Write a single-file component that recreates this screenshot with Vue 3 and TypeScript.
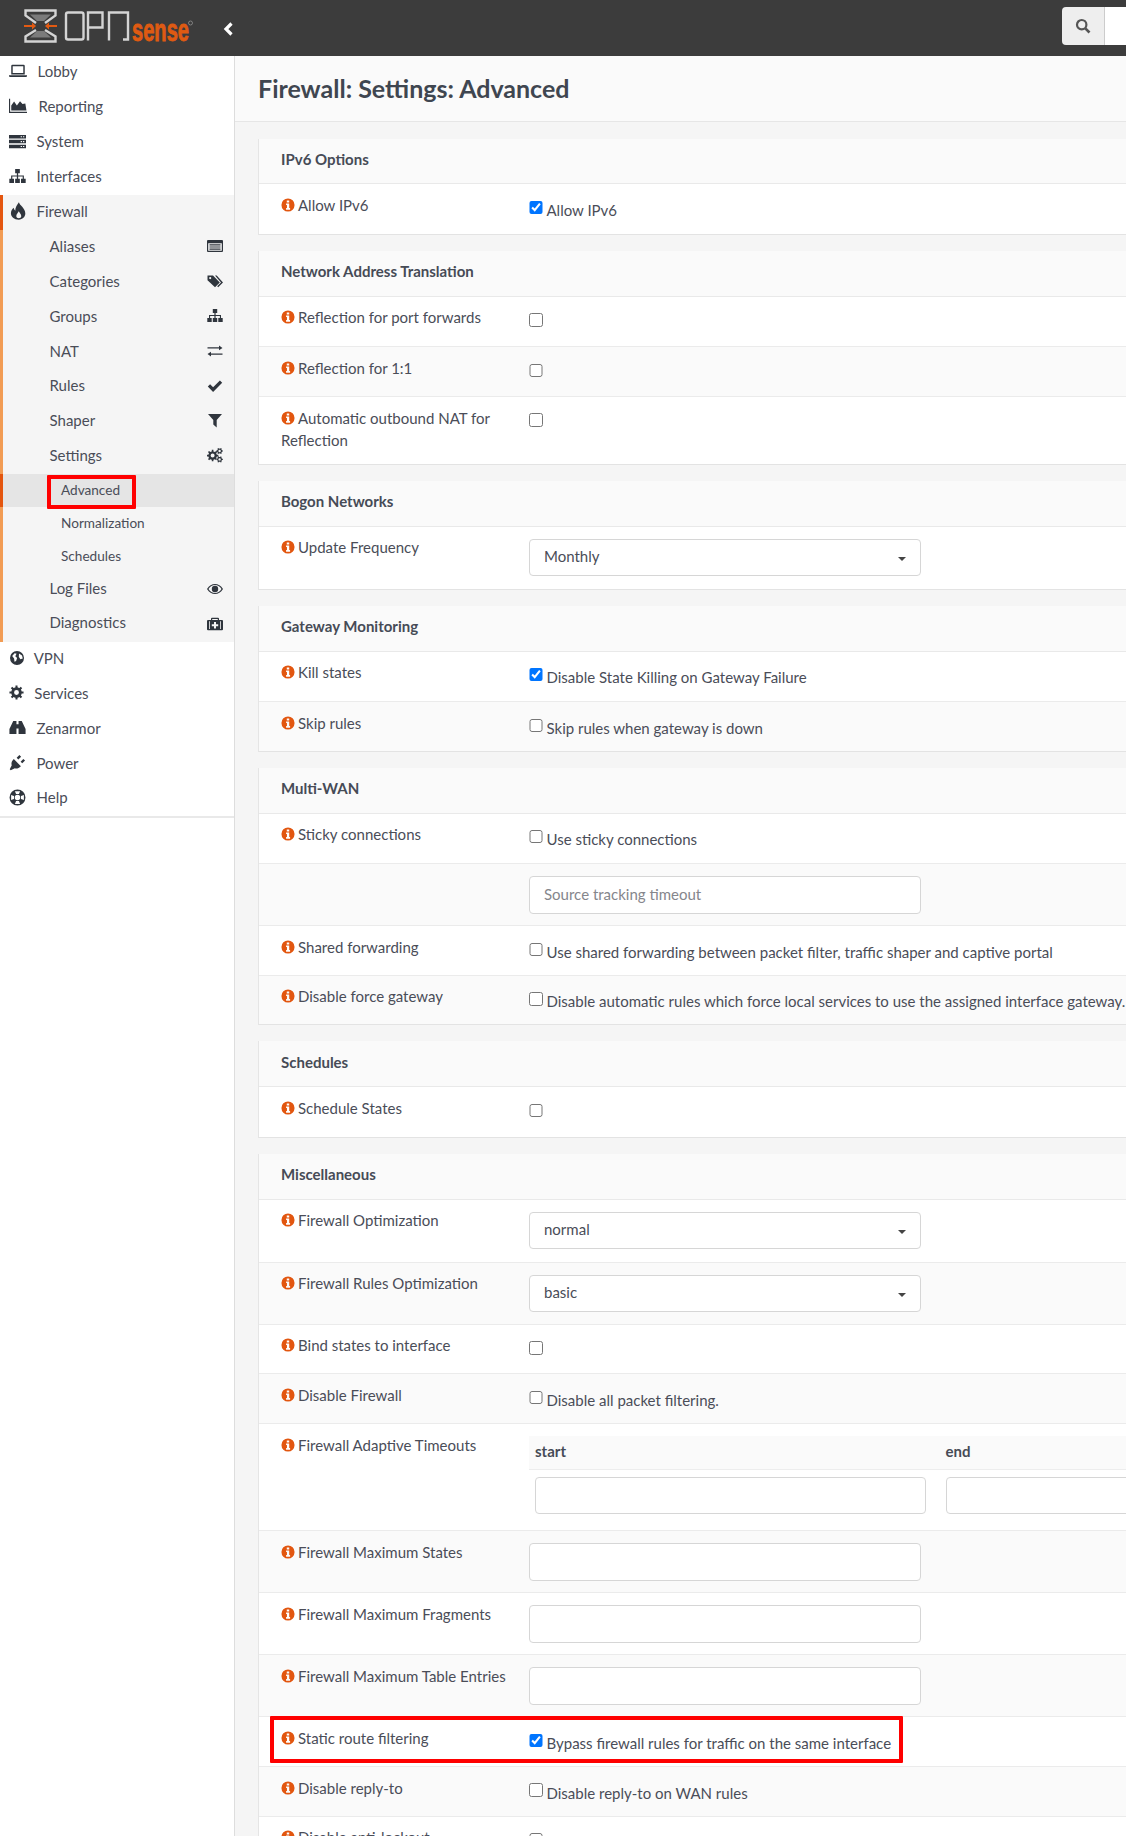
<script setup lang="ts">
type NavItem = {
  label: string
  icon?: string
  x?: number
  size?: number
  kind?: "sub" | "leaf"
  active?: boolean
  boxed?: boolean
}

type Row = {
  label?: string
  wrap?: boolean
  check?: boolean
  text?: string
  select?: string
  input?: string
  adaptive?: boolean
  tall?: boolean
  boxed?: boolean
}

type Section = { title: string; rows: Row[] }

// builds a cog outline, hole included
const gear = (cx: number, cy: number, r: number, hole: number, teeth = 8) => {
  let d = ""
  const step = (Math.PI * 2) / teeth
  for (let i = 0; i < teeth; i++) {
    const a = i * step
    const pts: [number, number][] = [
      [a - step * 0.5, r * 0.74],
      [a - step * 0.25, r * 0.74],
      [a - step * 0.18, r],
      [a + step * 0.18, r],
      [a + step * 0.25, r * 0.74],
    ]
    for (const [t, l] of pts) {
      d += `${d ? "L" : "M"}${(cx + Math.cos(t) * l).toFixed(2)} ${(cy + Math.sin(t) * l).toFixed(2)}`
    }
  }
  d += `zM${cx - hole} ${cy}a${hole} ${hole} 0 1 0 ${hole * 2} 0a${hole} ${hole} 0 1 0 ${-hole * 2} 0z`
  return d
}

const icons: Record<string, string> = {
  laptop: "M3 2.5h10a1 1 0 0 1 1 1v7.5H2V3.500a1 1 0 0 1 1-1zM3.300 3.800v6h9.400v-6zM0 11.800h16v.6a1 1 0 0 1-1 1H1a1 1 0 0 1-1-1z",
  chart: "M0 1.500h1V13h15v1.200H0zM2 12V7.500l2.500-3.500 2.500 3.500 2.800-3.800 2.200 2.500 2.500-.5 1 6.300z",
  server: "M0 1.800h16v3.300H0zM11 3h1.200v1H11zM13.200 3h1.200v1h-1.200zM0 6.400h16v3.300H0zM11 7.600h1.200v1H11zM13.200 7.600h1.200v1h-1.200zM0 11h16v3.300H0zM11 12.200h1.200v1H11zM13.200 12.200h1.200v1h-1.200z",
  sitemap: "M5.800 1h4.400v4H8.600v2H14v3h-1.100V8H8.600v2H7.400V8H3.100v2H2V7h5.400V5H5.800zM.3 10h4.400v4H.3zM5.800 10h4.400v4H5.800zM11.300 10h4.400v4h-4.400z",
  fire: "M8.800.3c.8 3 5.700 5.200 5.700 10 0 3-2.500 5.400-5.800 5.400C4.500 15.700 1.700 13 1.700 10c0-2.200 1.200-3.600 2.500-4.800.2 1.100.6 2 1.400 2.500C5.400 5 7.200 2.800 8.800.3zM8.700 8.300C7.800 9.800 6.500 11 6.500 12.700c0 1 1 1.800 2.200 1.800s2.200-.8 2.200-1.800c0-1.700-1.400-2.900-2.200-4.400z",
  list: "M1 2h14a1 1 0 0 1 1 1v10a1 1 0 0 1-1 1H1a1 1 0 0 1-1-1V3a1 1 0 0 1 1-1zM1.200 5.200v7.600h13.600V5.200zM2.500 6.300h11v1.200h-11zM2.500 8.400h11v1.200h-11zM2.500 10.500h11v1.200h-11z",
  tags: "M.5 2.500h5.500l6.800 7-4.800 4.800-7.500-7zM3.200 4a1.100 1.100 0 1 0 0 2.200 1.100 1.100 0 0 0 0-2.200zM8 2.500h1.700l6.300 7-4.800 4.800-1-1 3.800-3.800z",
  exchange: "M.5 4.200H12V2.500l3.500 2.400L12 7.300V5.600H.5zM15.500 10.400H4V8.700L.5 11.100 4 13.500v-1.700h11.500z",
  check: "M.8 8.600l2.300-2.300 3 3 6.800-6.800 2.300 2.300-9.100 9.100z",
  filter: "M1 2h14L9.700 8v7.500L6.300 12.500V8z",
  eye: "M0 8c2-3.500 5-5 8-5s6 1.500 8 5c-2 3.500-5 5-8 5s-6-1.500-8-5zM1.500 8c1.500 2.500 4 3.900 6.500 3.900s5-1.400 6.500-3.900C13 5.500 10.500 4.100 8 4.100S3 5.500 1.500 8zM8 4.800a3.200 3.200 0 1 1 0 6.400 3.200 3.200 0 0 1 0-6.400z",
  medkit: "M5 1.800h6a1 1 0 0 1 1 1V4h3a1 1 0 0 1 1 1v8.200a1 1 0 0 1-1 1H1a1 1 0 0 1-1-1V5a1 1 0 0 1 1-1h3V2.800a1 1 0 0 1 1-1zM5.200 3v1h5.600V3zM2.200 5.200v7.800H3V5.200zM13 5.200v7.800h.8V5.200zM7 6h2v2.200h2.200v2H9v2.200H7v-2.200H4.800v-2H7z",
  globe: "M8 1a7 7 0 1 1 0 14A7 7 0 0 1 8 1zM3.200 6l2.400-2.800 2 .6-1.300 2.400 1.800 1.800-1 3-1.600.8-.4-3.200zM10 3.600l3 1.800.8 3.200-2.400.6-1.600-2.400z",
  binoculars: "M4 1.800h3v12.400H.4V9.500zM9 1.800h3l3.600 7.700v4.700H9zM7 5h2v4H7z",
  plug: "M9.800.9l1.600 1.600-2.600 2.600-1.600-1.600zM15.100 6.200l-1.600-1.600-2.600 2.600 1.600 1.600zM4.500 4.800l6.700 6.700c-2 2-4.100 2.600-5.700 1.900L1.600 15.300.7 14.400l1.900-3.900C1.900 8.900 2.500 6.800 4.500 4.800z",
  lifering: "M8 .5a7.500 7.500 0 1 1 0 15 7.500 7.500 0 0 1 0-15zM5.600 2h4.800L9.400 4.700H6.600zM5.600 14h4.800L9.400 11.300H6.600zM2 5.600v4.800l2.700-1V6.600zM14 5.600v4.800l-2.700-1V6.600zM8 5.400a2.600 2.600 0 1 0 0 5.200 2.600 2.600 0 0 0 0-5.200z",
  cog: gear(8, 8, 7.6, 2.6),
  cogs: gear(5.6, 8.6, 5.8, 2) + gear(12.6, 4, 3.3, 1.2, 6) + gear(12.6, 12.4, 3.3, 1.2, 6),
}

const navItems: NavItem[] = [
  { label: "Lobby", icon: "laptop", x: 37.5 },
  { label: "Reporting", icon: "chart", x: 38.5 },
  { label: "System", icon: "server", x: 36.5, size: 17 },
  { label: "Interfaces", icon: "sitemap", x: 36.5, size: 17 },
]

const firewallItems: NavItem[] = [
  { label: "Firewall", icon: "fire", x: 36.5, active: true },
  { label: "Aliases", icon: "list", kind: "sub" },
  { label: "Categories", icon: "tags", kind: "sub" },
  { label: "Groups", icon: "sitemap", kind: "sub" },
  { label: "NAT", icon: "exchange", kind: "sub" },
  { label: "Rules", icon: "check", kind: "sub" },
  { label: "Shaper", icon: "filter", kind: "sub" },
  { label: "Settings", icon: "cogs", kind: "sub" },
  { label: "Advanced", kind: "leaf", active: true, boxed: true },
  { label: "Normalization", kind: "leaf" },
  { label: "Schedules", kind: "leaf" },
  { label: "Log Files", icon: "eye", kind: "sub" },
  { label: "Diagnostics", icon: "medkit", kind: "sub" },
]

const bottomItems: NavItem[] = [
  { label: "VPN", icon: "globe", x: 33.7, size: 16 },
  { label: "Services", icon: "cog", x: 34.3, size: 15 },
  { label: "Zenarmor", icon: "binoculars", x: 36.5, size: 17 },
  { label: "Power", icon: "plug", x: 36.5, size: 17 },
  { label: "Help", icon: "lifering", x: 36.5, size: 17 },
]

const sections: Section[] = [
  {
    title: "IPv6 Options",
    rows: [{ label: "Allow IPv6", check: true, text: "Allow IPv6" }],
  },
  {
    title: "Network Address Translation",
    rows: [
      { label: "Reflection for port forwards", check: false },
      { label: "Reflection for 1:1", check: false },
      { label: "Automatic outbound NAT for Reflection", check: false, wrap: true, tall: true },
    ],
  },
  {
    title: "Bogon Networks",
    rows: [{ label: "Update Frequency", select: "Monthly" }],
  },
  {
    title: "Gateway Monitoring",
    rows: [
      { label: "Kill states", check: true, text: "Disable State Killing on Gateway Failure" },
      { label: "Skip rules", check: false, text: "Skip rules when gateway is down" },
    ],
  },
  {
    title: "Multi-WAN",
    rows: [
      { label: "Sticky connections", check: false, text: "Use sticky connections" },
      { input: "Source tracking timeout" },
      { label: "Shared forwarding", check: false, text: "Use shared forwarding between packet filter, traffic shaper and captive portal" },
      { label: "Disable force gateway", check: false, text: "Disable automatic rules which force local services to use the assigned interface gateway." },
    ],
  },
  {
    title: "Schedules",
    rows: [{ label: "Schedule States", check: false }],
  },
  {
    title: "Miscellaneous",
    rows: [
      { label: "Firewall Optimization", select: "normal" },
      { label: "Firewall Rules Optimization", select: "basic" },
      { label: "Bind states to interface", check: false },
      { label: "Disable Firewall", check: false, text: "Disable all packet filtering." },
      { label: "Firewall Adaptive Timeouts", adaptive: true },
      { label: "Firewall Maximum States", input: "" },
      { label: "Firewall Maximum Fragments", input: "" },
      { label: "Firewall Maximum Table Entries", input: "" },
      { label: "Static route filtering", check: true, text: "Bypass firewall rules for traffic on the same interface", boxed: true },
      { label: "Disable reply-to", check: false, text: "Disable reply-to on WAN rules" },
      { label: "Disable anti-lockout", check: false },
    ],
  },
]
</script>

<template>
  <div class="page">
    <header class="topbar">
      <svg class="logo" viewBox="15 0 190 55" width="190" height="55" role="img" aria-label="OPNsense">
        <path d="M30 14.500H51L44 21H37zM30 37.500H51L44 31H37z" fill="#7b7b7b" />
        <g fill="none" stroke="#d4d4d4" stroke-width="2.4">
          <path d="M36 23 25.500 15.500V10.500H55.500V15.500L45 23M36 30 25.500 36.500V41.500H55.500V36.500L45 30" />
          <rect x="66" y="12.500" width="17.500" height="27" rx="2" />
          <polyline points="88,40.500 88,12.500 102.500,12.500 102.500,27.500 89,27.500" />
          <polyline points="109,40.500 109,12.500 128,12.500 128,39.500 123,39.500" />
        </g>
        <path d="M24 25h8v-2.500l4 3.500-4 3.500V27h-8zM57 25h-8v-2.500L45 26l4 3.500V27h8z" fill="#e35a12" />
        <text class="logo-sense" x="132" y="41" textLength="57" lengthAdjust="spacingAndGlyphs">sense</text>
        <circle cx="190.500" cy="23" r="2" fill="none" stroke="#999" stroke-width=".7" />
      </svg>
      <svg class="collapse" viewBox="0 0 12 16" width="12" height="16">
        <path d="M9.500 2.500 4 8l5.500 5.500" fill="none" stroke="#fff" stroke-width="3.200" />
      </svg>
      <div class="search">
        <button class="search-btn" type="button" aria-label="Search">
          <svg viewBox="0 0 16 16" width="16" height="16">
            <circle cx="6.700" cy="6.700" r="4.700" fill="none" stroke="#555" stroke-width="2.200" />
            <path d="m10.300 10.300 4.200 4.200" stroke="#555" stroke-width="2.600" />
          </svg>
        </button>
        <input class="search-input" type="text" />
      </div>
    </header>

    <div class="body">
      <aside class="sidebar">
        <nav>
          <a v-for="item in navItems" :key="item.label" class="nav-item">
            <span class="nav-icon" :style="{ width: (item.x ?? 0) - 9 + 'px' }">
              <svg viewBox="0 0 16 16" :width="item.size ?? 18" :height="item.size ?? 18"><path :d="icons[item.icon!]" fill-rule="evenodd" /></svg>
            </span>
            {{ item.label }}
          </a>
          <div class="nav-group">
            <a
              v-for="item in firewallItems"
              :key="item.label"
              class="nav-item"
              :class="[item.kind, { active: item.active }]"
            >
              <span v-if="!item.kind" class="nav-icon" :style="{ width: (item.x ?? 0) - 9 + 'px' }">
                <svg viewBox="0 0 16 16" width="18" height="18"><path :d="icons[item.icon!]" fill-rule="evenodd" /></svg>
              </span>
              {{ item.label }}
              <svg v-if="item.kind === 'sub'" class="sub-icon" viewBox="0 0 16 16" width="16" height="16">
                <path :d="icons[item.icon!]" fill-rule="evenodd" />
              </svg>
              <span v-if="item.boxed" class="redbox nav-box"></span>
            </a>
          </div>
          <a v-for="item in bottomItems" :key="item.label" class="nav-item">
            <span class="nav-icon" :style="{ width: (item.x ?? 0) - 9 + 'px' }">
              <svg viewBox="0 0 16 16" :width="item.size ?? 18" :height="item.size ?? 18"><path :d="icons[item.icon!]" fill-rule="evenodd" /></svg>
            </span>
            {{ item.label }}
          </a>
        </nav>
      </aside>

      <main class="main">
        <div class="title-bar"><h1>Firewall: Settings: Advanced</h1></div>
        <div class="content">
          <section v-for="section in sections" :key="section.title" class="card">
            <h2>{{ section.title }}</h2>
            <div
              v-for="(row, i) in section.rows"
              :key="i"
              class="row"
              :class="{
                even: i % 2 === 1,
                field: row.select !== undefined || row.input !== undefined,
                tall: row.tall,
                adaptive: row.adaptive,
              }"
            >
              <div class="row-label">
                <template v-if="row.label">
                  <svg class="info" viewBox="0 0 16 16" width="14" height="14">
                    <path
                      d="M8 .5a7.500 7.500 0 1 1 0 15 7.500 7.500 0 0 1 0-15zM6.600 2.800h2.800v2.200H6.600zM5.800 6.200h3.600v5.300h1v1.800H5.800v-1.800h1V8H5.800z"
                      fill-rule="evenodd"
                    />
                  </svg>
                  <span :class="{ wrap: row.wrap }">{{ row.label }}</span>
                </template>
              </div>
              <div class="row-value">
                <label v-if="row.check !== undefined" class="check">
                  <input type="checkbox" :checked="row.check" />
                  <span v-if="row.text">{{ row.text }}</span>
                </label>
                <div v-else-if="row.select" class="select">
                  {{ row.select }}
                  <span class="caret"></span>
                </div>
                <input v-else-if="row.input !== undefined" class="text-input" type="text" :placeholder="row.input" />
                <div v-else-if="row.adaptive" class="adaptive-grid">
                  <div class="adaptive-head">start</div>
                  <div class="adaptive-head">end</div>
                  <input class="text-input wide" type="text" />
                  <input class="text-input wide" type="text" />
                </div>
              </div>
              <span v-if="row.boxed" class="redbox row-box"></span>
            </div>
          </section>
        </div>
      </main>
    </div>
  </div>
</template>

<style>
html,
body {
  margin: 0;
  background: #fff;
}
</style>

<style scoped>
.page {
  width: 1126px;
  height: 1836px;
  overflow: hidden;
  font-family: Lato, "Noto Sans", sans-serif;
  font-size: 15px;
  color: #4a4d58;
}

.topbar {
  height: 55.5px;
  box-sizing: border-box;
  background: #3c3c3c;
  display: flex;
  align-items: flex-start;
}
.logo {
  margin-left: 15px;
  flex: none;
}
.logo-sense {
  font-family: "Liberation Sans", sans-serif;
  font-weight: 700;
  font-size: 31px;
  fill: #df5a12;
  stroke: #df5a12;
  stroke-width: 0.9px;
}
.collapse {
  flex: none;
  margin: 21px 0 0 17px;
}
.search {
  display: flex;
  margin: 7px 0 0 auto;
  height: 37.500px;
}
.search-btn {
  width: 43px;
  padding: 0;
  border: 0;
  border-right: 1px solid #ccc;
  border-radius: 4px 0 0 4px;
  background: #eee;
  display: flex;
  align-items: center;
  justify-content: center;
}
.search-input {
  width: 21px;
  padding: 0;
  border: 0;
  background: #fff;
}

.body {
  display: flex;
  height: 1780.5px;
}
.sidebar {
  width: 235px;
  flex: none;
  box-sizing: border-box;
  border-right: 1px solid #ddd;
  background: #fff;
}
nav {
  border-bottom: 2px solid #e9e9e9;
}
.nav-item {
  position: relative;
  display: flex;
  align-items: center;
  height: 34.900px;
  box-sizing: border-box;
  padding: 0 0 3px 9px;
  color: #4a4d58;
}
.nav-icon {
  flex: none;
  display: flex;
  align-items: center;
}
.nav-icon svg,
.sub-icon {
  fill: #2f353d;
}

.nav-group {
  background: #f5f5f5;
}
.nav-group .nav-item {
  border-left: 3px solid #f29c54;
  padding-left: 6px;
}
.nav-group .nav-item.active {
  border-left-color: #e4560f;
}
.nav-group .sub {
  padding-left: 46.500px;
}
.sub-icon {
  position: absolute;
  left: 204px;
  top: 8px;
}
.nav-group .leaf {
  height: 33px;
  padding: 0 0 1px 58px;
  font-size: 13.600px;
}
.nav-group .leaf.active {
  background: #e5e5e5;
}
.nav-group .nav-item:nth-last-child(-n + 2) {
  height: 34.400px;
  padding-bottom: 5px;
}

.redbox {
  position: absolute;
  box-sizing: border-box;
  border: 4px solid #f00;
  border-radius: 1px;
}
.nav-box {
  left: 43.500px;
  top: 1px;
  width: 89.500px;
  height: 34px;
}

.main {
  flex: 1;
  min-width: 0;
  overflow: hidden;
  background: #f5f5f5;
}
.title-bar {
  height: 66px;
  box-sizing: border-box;
  background: #fafafa;
  border-bottom: 1px solid #e6e6e6;
  padding-left: 23px;
  display: flex;
  align-items: center;
}
h1 {
  margin: 0;
  font-size: 25px;
  font-weight: 700;
  color: #3f4650;
}
.content {
  padding: 17px 0 0 23px;
}
.card {
  width: 900px;
  margin-bottom: 16px;
  box-sizing: border-box;
  border-left: 1px solid #e5e5e5;
  border-bottom: 1px solid #e3e3e3;
  background: #fff;
}
h2 {
  margin: 0;
  height: 45.850px;
  box-sizing: border-box;
  padding: 0 0 4px 22px;
  display: flex;
  align-items: center;
  background: #fafafa;
  border-bottom: 1px solid #e9e9e9;
  font-size: 15px;
  font-weight: 700;
  color: #464b56;
}
.row {
  position: relative;
  display: flex;
  height: 49.600px;
  box-sizing: border-box;
  border-top: 1px solid #ebebeb;
  background: #fff;
}
h2 + .row {
  border-top: 0;
}
.row.even {
  background: #fafafa;
}
.row.field {
  height: 62px;
}
.row.tall {
  height: 68px;
}
.row.adaptive {
  height: 107.500px;
}
.row-label {
  width: 270px;
  flex: none;
  box-sizing: border-box;
  padding: 9.600px 0 0 22px;
  line-height: 22px;
}
.info {
  fill: #e2560f;
  margin-right: 3px;
  vertical-align: -1px;
}
.row-label:has(.wrap) {
  padding-right: 18px;
}
.row-value {
  flex: none;
}
.check {
  display: flex;
  align-items: flex-start;
  gap: 4px;
  padding-top: 16.300px;
  line-height: 22px;
  white-space: nowrap;
}
.check input {
  margin: 0;
  width: 13.500px;
  height: 13.500px;
  flex: none;
}
.check span {
  margin-top: -1.800px;
}
.select,
.text-input {
  width: 392px;
  height: 37.500px;
  margin-top: 11.800px;
  box-sizing: border-box;
  background: #fff;
  border: 1px solid #d6d6d6;
  border-radius: 4px;
  padding: 0 14px 2px;
  font: inherit;
  color: inherit;
}
.select {
  position: relative;
  display: flex;
  align-items: center;
}
.caret {
  position: absolute;
  right: 14px;
  top: 17px;
  border: 4.500px solid transparent;
  border-top-color: #444;
  border-bottom: 0;
}
.text-input::placeholder {
  color: #85868c;
  opacity: 1;
}
.adaptive-grid {
  width: 620px;
  margin-top: 12px;
  display: grid;
  grid-template-columns: 410.500px 1fr;
}
.adaptive-head {
  height: 34px;
  box-sizing: border-box;
  padding: 0 0 3px 6px;
  display: flex;
  align-items: center;
  background: #fafafa;
  border-bottom: 1px solid #ededed;
  font-weight: 700;
  color: #464b56;
}
.text-input.wide {
  margin: 6.700px 0 0 6px;
  width: 390.500px;
}
.row-box {
  left: 10.500px;
  top: -1px;
  width: 633px;
  height: 47px;
}
</style>
